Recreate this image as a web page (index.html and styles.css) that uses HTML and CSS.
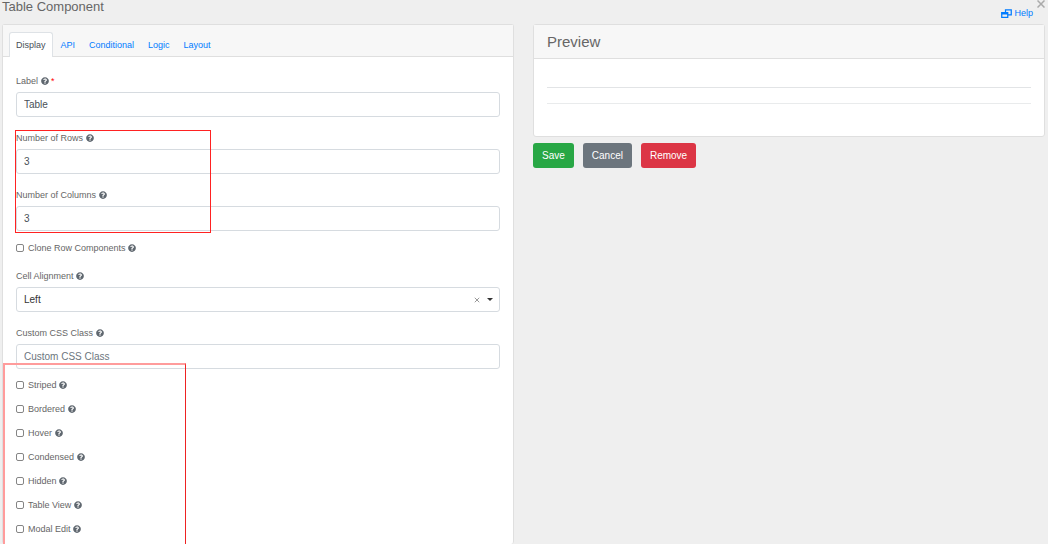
FILE: index.html
```
<!DOCTYPE html>
<html lang="en">
<head>
    <meta charset="UTF-8">
    <meta name="viewport" content="width=device-width, initial-scale=1.0">
    <title>Table Component</title>
    <link rel="stylesheet" href="styles.css">
</head>
<body>

    <svg class="sprite" aria-hidden="true">
        <symbol id="icon-help" viewBox="0 0 512 512">
            <path d="M504 256c0 137-111 248-248 248S8 393 8 256 119 8 256 8s248 111 248 248zM262.700 90c-54.500 0-89.300 23-116.500 63.800-3.500 5.300-2.400 12.400 2.700 16.300l34.700 26.300c5.200 3.900 12.600 3 16.700-2.100 17.900-22.700 30.100-35.800 57.300-35.800 20.400 0 45.700 13.100 45.700 33 0 15-12.400 22.700-32.500 34C247.100 238.500 216 254.900 216 296v4c0 6.600 5.400 12 12 12h56c6.600 0 12-5.400 12-12v-1.300c0-28.500 83.200-29.600 83.200-106.700 0-58-60.200-102-116.500-102zM256 338c-25.400 0-46 20.600-46 46s20.600 46 46 46 46-20.600 46-46-20.600-46-46-46z"/>
        </symbol>
    </svg>

    <div class="page">
        <header class="header">
            <h1 class="title">Table Component</h1>
            <a class="help-link" href="#">
                <svg viewBox="0 0 22 18" aria-hidden="true">
                    <path fill="none" stroke="currentColor" stroke-width="2.500" d="M9 6V1.500h11.500v10H14"/>
                    <path fill="none" stroke="currentColor" stroke-width="2.500" d="M1.500 7h12v9.500h-12z"/>
                    <path fill="currentColor" d="M1 6h13v5H1z"/>
                </svg>
                Help
            </a>
            <button class="close" type="button" aria-label="Close">
                <svg viewBox="0 0 8 8" aria-hidden="true"><path d="M.5.500l7 7M7.500.500l-7 7"/></svg>
            </button>
        </header>

        <main class="columns">
            <form class="card settings" id="settings">
                <nav class="card-header tabs">
                    <a class="tab active" href="#">Display</a>
                    <a class="tab" href="#">API</a>
                    <a class="tab" href="#">Conditional</a>
                    <a class="tab" href="#">Logic</a>
                    <a class="tab" href="#">Layout</a>
                </nav>
                <div class="settings-body">
                    <div class="field">
                        <label for="label">Label <svg class="tip"><use href="#icon-help"/></svg> <span class="required">*</span></label>
                        <input class="control" type="text" id="label" value="Table">
                    </div>

                    <div class="group">
                        <div class="field">
                            <label for="rows">Number of Rows <svg class="tip"><use href="#icon-help"/></svg></label>
                            <input class="control" type="text" id="rows" value="3">
                        </div>
                        <div class="field">
                            <label for="cols">Number of Columns <svg class="tip"><use href="#icon-help"/></svg></label>
                            <input class="control" type="text" id="cols" value="3">
                        </div>
                        <div class="marker marker-size"></div>
                    </div>

                    <div class="check">
                        <input type="checkbox" id="clone">
                        <label for="clone">Clone Row Components <svg class="tip"><use href="#icon-help"/></svg></label>
                    </div>

                    <div class="field">
                        <label for="align">Cell Alignment <svg class="tip"><use href="#icon-help"/></svg></label>
                        <div class="control select">
                            <select id="align">
                                <option>Left</option>
                                <option>Center</option>
                                <option>Right</option>
                            </select>
                            <button class="clear" type="button" aria-label="Clear">
                                <svg viewBox="0 0 8 8" aria-hidden="true"><path d="M1 1l6 6M7 1L1 7"/></svg>
                            </button>
                            <svg class="caret" viewBox="0 0 6 3" aria-hidden="true"><path d="M0 0h6L3 3z"/></svg>
                        </div>
                    </div>

                    <div class="field">
                        <label for="css">Custom CSS Class <svg class="tip"><use href="#icon-help"/></svg></label>
                        <input class="control" type="text" id="css" placeholder="Custom CSS Class">
                    </div>

                    <div class="group options">
                        <div class="check">
                            <input type="checkbox" id="striped">
                            <label for="striped">Striped <svg class="tip"><use href="#icon-help"/></svg></label>
                        </div>
                        <div class="check">
                            <input type="checkbox" id="bordered">
                            <label for="bordered">Bordered <svg class="tip"><use href="#icon-help"/></svg></label>
                        </div>
                        <div class="check">
                            <input type="checkbox" id="hover">
                            <label for="hover">Hover <svg class="tip"><use href="#icon-help"/></svg></label>
                        </div>
                        <div class="check">
                            <input type="checkbox" id="condensed">
                            <label for="condensed">Condensed <svg class="tip"><use href="#icon-help"/></svg></label>
                        </div>
                        <div class="check">
                            <input type="checkbox" id="hidden">
                            <label for="hidden">Hidden <svg class="tip"><use href="#icon-help"/></svg></label>
                        </div>
                        <div class="check">
                            <input type="checkbox" id="tableview">
                            <label for="tableview">Table View <svg class="tip"><use href="#icon-help"/></svg></label>
                        </div>
                        <div class="check">
                            <input type="checkbox" id="modaledit">
                            <label for="modaledit">Modal Edit <svg class="tip"><use href="#icon-help"/></svg></label>
                        </div>
                        <div class="marker marker-options"></div>
                    </div>
                </div>
            </form>

            <section class="side">
                <div class="card">
                    <h2 class="card-header preview-title">Preview</h2>
                    <div class="preview-body">
                        <div class="preview-table"></div>
                    </div>
                </div>
                <div class="actions">
                    <button class="btn save" type="submit" form="settings">Save</button>
                    <button class="btn cancel" type="button">Cancel</button>
                    <button class="btn remove" type="button">Remove</button>
                </div>
            </section>
        </main>
    </div>

</body>
</html>
```
FILE: styles.css
```
* {
    box-sizing: border-box;
}
body {
    margin: 0;
    background-color: #efefef;
    color: #666;
    font-family: "Liberation Sans", Arial, sans-serif;
    font-size: 9px;
    line-height: 14px;
}
a {
    color: #007bff;
    text-decoration: none;
}
button, input, select {
    font-family: inherit;
}
.sprite {
    display: none;
}
.page {
    display: flex;
    flex-direction: column;
    height: 100vh;
    padding: 0 3px 0 2px;
    overflow: hidden;
}

/* Header */
.header {
    display: flex;
    align-items: flex-start;
    height: 24px;
}
.title {
    flex: 1;
    margin: 0;
    font-size: 13px;
    font-weight: normal;
    line-height: 14px;
}
.help-link {
    display: flex;
    align-items: center;
    gap: 2px;
    padding-top: 6px;
}
.help-link svg {
    width: 11px;
    height: 9px;
}
.close, .clear {
    display: flex;
    padding: 0;
    border: none;
    background: none;
    cursor: pointer;
}
.close {
    margin-left: 4px;
}
.close svg, .clear svg {
    width: 8px;
    height: 8px;
    fill: none;
    stroke: #aaa;
}
.close svg {
    stroke-width: 1.5;
}

/* Cards */
.columns {
    flex: 1;
    display: grid;
    grid-template-columns: 1fr 1fr;
    gap: 19px;
    min-height: 0;
}
.card {
    background-color: #fff;
    border: 1px solid #dfdfdf;
    border-radius: 3px;
}
.settings {
    border-bottom: none;
}
.card-header {
    background-color: #f7f7f7;
    border-bottom: 1px solid #dfdfdf;
}
.tabs {
    display: flex;
    padding: 7px 6px 0;
}
.tab {
    margin-bottom: -1px;
    padding: 5px 6px;
    border: 1px solid transparent;
    border-bottom: none;
    border-radius: 3px 3px 0 0;
}
.tab.active {
    margin-right: 1px;
    background-color: #fff;
    border-color: #dee2e6;
    color: #495057;
}
.settings-body {
    padding: 3px 13px 0;
}

/* Form fields */
.field {
    padding-top: 14px;
}
.field label {
    display: block;
    margin-bottom: 4px;
}
.tip {
    width: 8px;
    height: 8px;
    fill: #5f676f;
    vertical-align: -1px;
}
.required {
    color: #f00;
}
.control {
    display: block;
    width: 100%;
    height: 25px;
    padding: 0 7px;
    background-color: #fff;
    border: 1px solid #d6dbe0;
    border-radius: 3px;
    color: #495057;
    font-size: 10px;
}
.control::placeholder {
    color: #6c757d;
    opacity: 1;
}
.select {
    display: flex;
    align-items: center;
    padding: 0 6px 0 7px;
}
.select select {
    flex: 1;
    padding: 0;
    appearance: none;
    background: none;
    border: none;
    color: #333;
    font-size: 10px;
}
.clear svg {
    width: 6px;
    height: 6px;
    stroke: #777;
}
.caret {
    width: 6px;
    height: 3px;
    margin-left: 7px;
    fill: #333;
}
.check {
    display: flex;
    align-items: center;
    gap: 4px;
    padding-top: 10px;
}
.check input {
    appearance: none;
    width: 8px;
    height: 8px;
    margin: 0;
    background-color: #fff;
    border: 1px solid #858585;
    border-radius: 2px;
}
.check input:checked {
    background-color: #007bff;
}

/* Red frames around the highlighted settings */
.group {
    position: relative;
}
.options {
    margin-top: -1px;
}
.marker {
    position: absolute;
    pointer-events: none;
}
.marker-size {
    top: 13px;
    bottom: -2px;
    left: -1px;
    width: 196px;
    border: 1px solid #f22;
}
.marker-options {
    top: -5px;
    bottom: -20px;
    left: -13px;
    width: 183px;
    border: 2px solid #ff9c9c;
    border-right: 1px solid #e22;
}

/* Preview */
.preview-title {
    margin: 0;
    padding: 8px 13px;
    font-size: 15px;
    font-weight: normal;
    line-height: 17px;
}
.preview-body {
    padding: 28px 13px 32px;
}
.preview-table {
    height: 17px;
    border-top: 1px solid #e2e4e6;
    border-bottom: 1px solid #e9ebec;
}
.actions {
    display: flex;
    gap: 9px;
    margin-top: 6px;
}
.btn {
    height: 25px;
    padding: 0 9px;
    border: none;
    border-radius: 3px;
    color: #fff;
    font-size: 10px;
    cursor: pointer;
}
.save {
    background-color: #28a745;
}
.cancel {
    background-color: #6c757d;
}
.remove {
    background-color: #dc3545;
}
```
